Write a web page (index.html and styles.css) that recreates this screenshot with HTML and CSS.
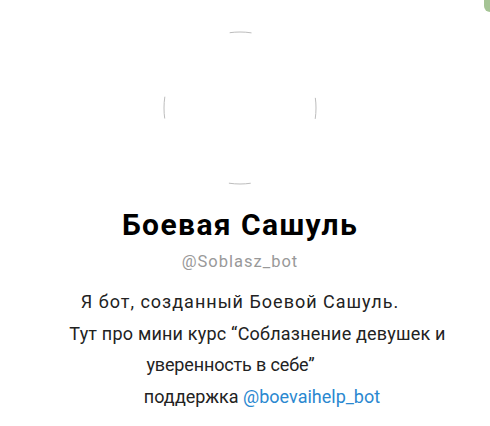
FILE: index.html
```html
<!DOCTYPE html>
<html>
<head>
	<title>Боевая Сашуль</title>
	<meta charset="utf-8">
	<link rel="stylesheet" href="styles.css">
</head>
<body>
	<!--profile start-->
	<div class="profile">
		<div class="corner"></div>
		<div class="avatar">
			<svg width="156" height="156" viewBox="0 0 156 156">
				<circle cx="78" cy="78" r="76" fill="#fff" stroke="#bdbdbd" stroke-width="1"
					stroke-dasharray="22 97.38" stroke-dashoffset="11"/>
			</svg>
		</div>
		<div class="p_name">Боевая Сашуль</div>
		<div class="p_user">@Soblasz_bot</div>
		<div class="p_about">
			<div class="line l1">Я бот, созданный Боевой Сашуль.</div>
			<div class="line l2">Тут про мини курс “Соблазнение девушек и</div>
			<div class="line l3">уверенность в себе”</div>
			<div class="line l4">поддержка <a href="#">@boevaihelp_bot</a></div>
		</div>
	</div>
	<!--end profile-->
</body>
</html>
```

FILE: styles.css
```css
*{margin:0;padding:0;}
body{background:#fff;font-family:Roboto,"Noto Sans",sans-serif;color:#222;}
/*profile start*/
.profile{position:relative;width:480px;height:426px;padding-right:10px;overflow:hidden;display:flex;flex-direction:column;align-items:center;}
.profile .corner{position:absolute;top:0;right:0;width:6px;height:12px;background:#8fb57a;border-bottom-left-radius:6px;opacity:.8;}
.profile .avatar{margin-top:30px;width:156px;height:156px;}
.profile .avatar svg{display:block;}
.profile .p_name{margin-top:21px;font-size:30px;font-weight:700;color:#000;line-height:36px;letter-spacing:1.4px;}
.profile .p_user{margin-top:7.5px;font-size:16.5px;color:#999;line-height:22px;letter-spacing:1px;}
.profile .p_about{margin-top:13.5px;display:flex;flex-direction:column;align-items:center;font-size:18px;line-height:31.5px;color:#222;}
.profile .p_about .line{white-space:nowrap;}
.profile .p_about .l1{letter-spacing:1px;}
.profile .p_about .l2{padding-left:35px;letter-spacing:0.2px;}
.profile .p_about .l3{padding-right:19px;letter-spacing:-0.15px;}
.profile .p_about .l4{padding-left:44px;}
.profile .p_about a{color:#2a88d0;text-decoration:none;}
/*end profile*/
```
